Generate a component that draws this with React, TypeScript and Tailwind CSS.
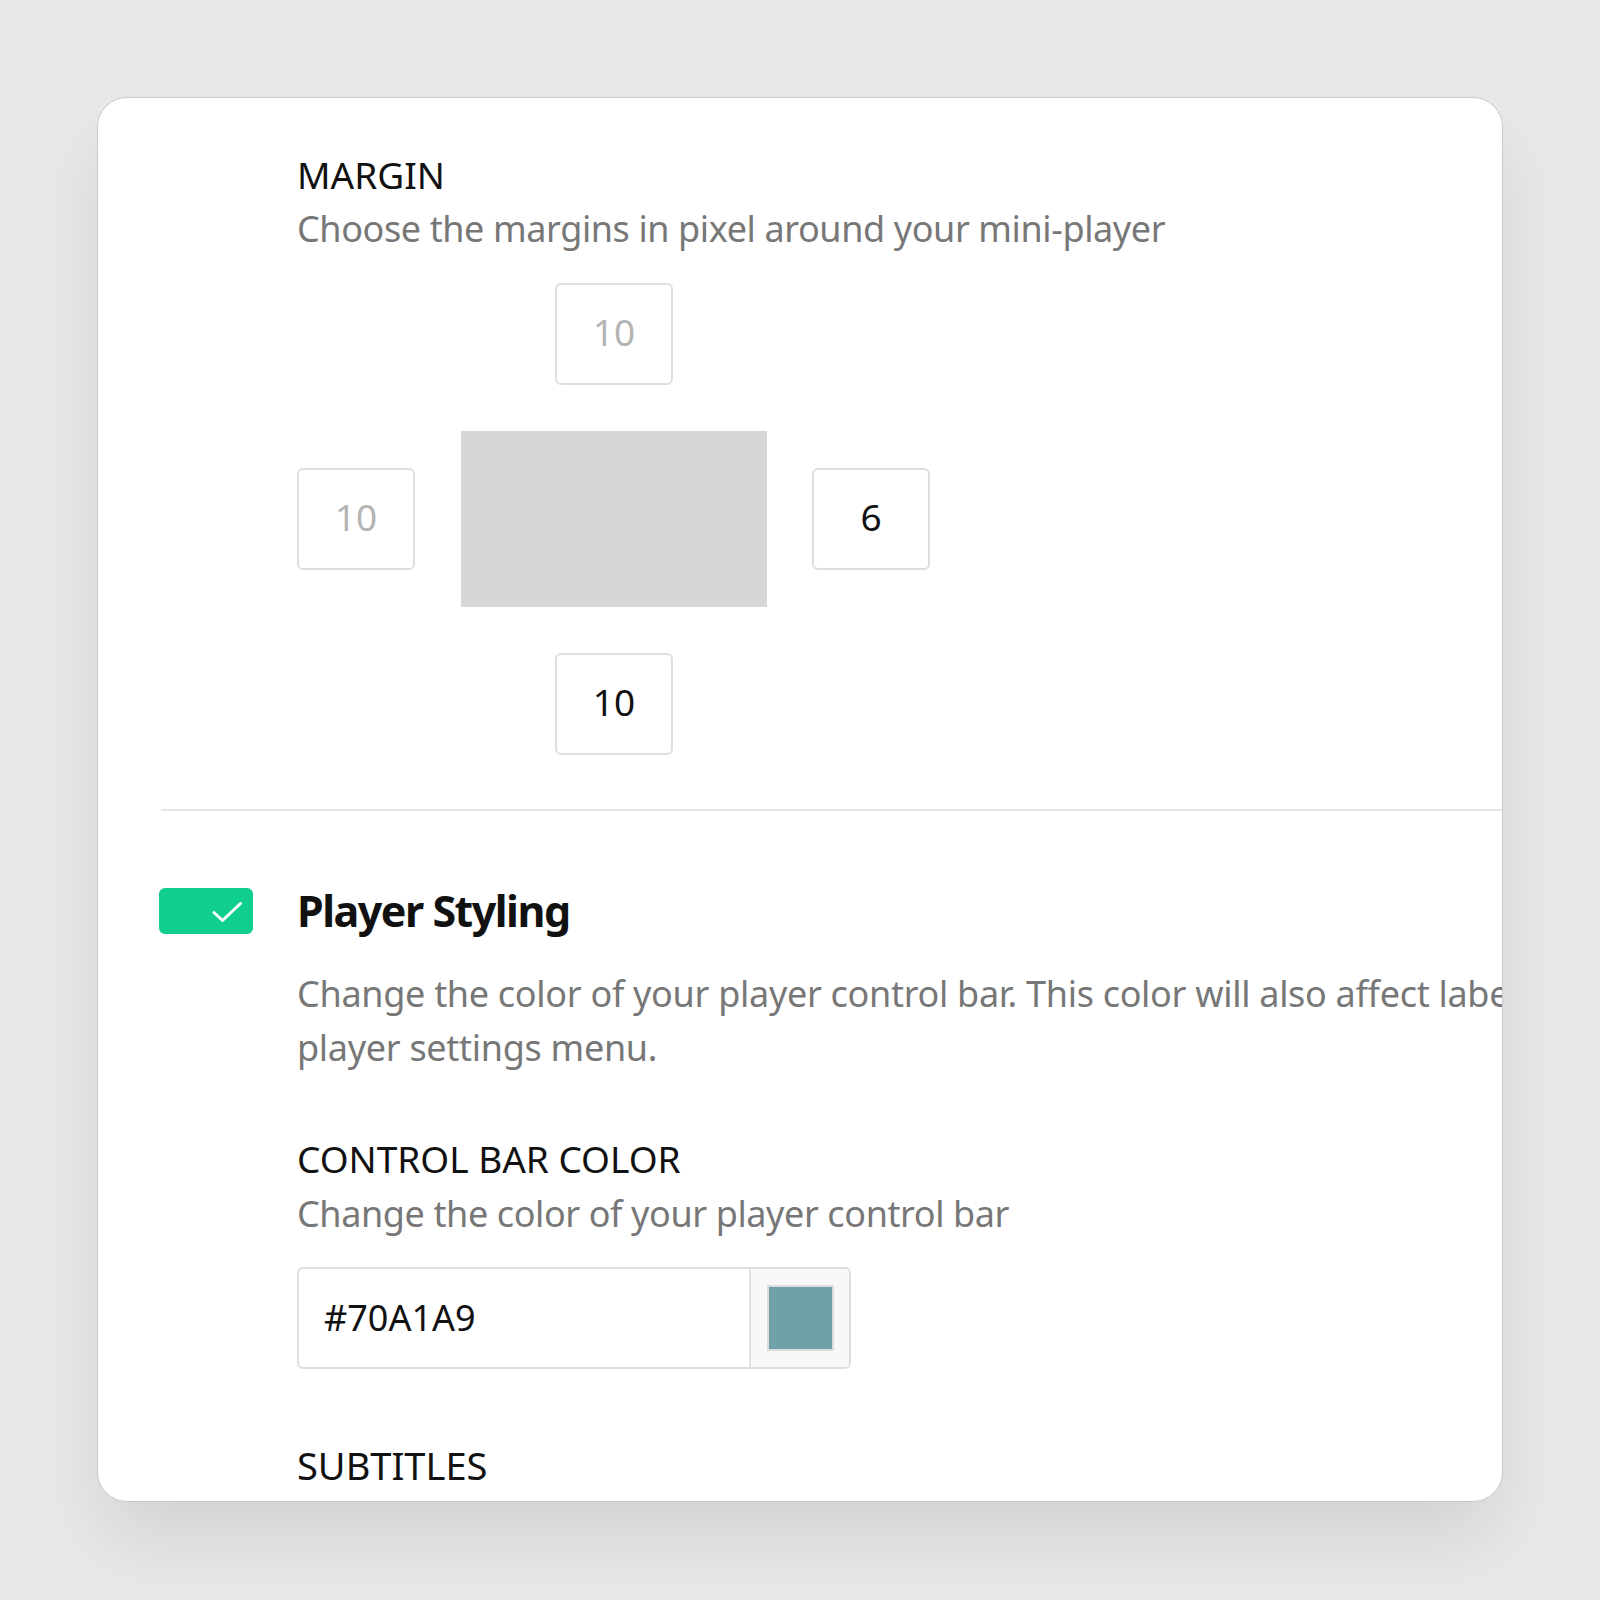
import React from "react";

function MarginBox({ value, muted }: { value: string; muted?: boolean }) {
  return (
    <div
      className={
        "flex h-[102px] w-[118px] items-center justify-center rounded-[6px] border-2 border-[#dedede] bg-white pb-[6px] text-[37px] leading-none " +
        (muted ? "text-[#b4b4b4]" : "text-[#111111]")
      }
    >
      {value}
    </div>
  );
}

export default function App() {
  return (
    <div className="h-[1600px] w-[1600px] bg-[#e8e8e8] pl-[97px] pt-[97px] font-['Noto_Sans',sans-serif]">
      <div className="h-[1405px] w-[1406px] overflow-hidden rounded-[30px] border border-[#c6c9d8] bg-white shadow-[0_40px_80px_-10px_rgba(0,0,0,0.11)]">
        {/* Margin */}
        <div className="pl-[199px] pt-[53px]">
          <h3 className="text-[37px] leading-[48px] text-[#111111]">MARGIN</h3>
          <p className="mt-[3px] text-[36px] leading-[54px] tracking-[-0.4px] text-[#777777]">
            Choose the margins in pixel around your mini-player
          </p>

          <div className="mt-[27px] grid grid-cols-[119px_306px_119px] grid-rows-[102px_176px_102px] gap-x-[45px] gap-y-[46px]">
            <div />
            <div className="justify-self-center">
              <MarginBox value="10" muted />
            </div>
            <div />
            <div className="self-center">
              <MarginBox value="10" muted />
            </div>
            <div className="bg-[#d6d6d6]" />
            <div className="self-center">
              <MarginBox value="6" />
            </div>
            <div />
            <div className="justify-self-center">
              <MarginBox value="10" />
            </div>
            <div />
          </div>
        </div>

        <div className="ml-[63px] mt-[54px] h-[2px] bg-[#e6e6e6]" />

        {/* Player styling */}
        <div className="mt-[77px] flex items-center">
          <div className="ml-[61px] h-[46px] w-[94px] rounded-[6px] bg-[#10cf8d]">
            <svg width="94" height="46" viewBox="0 0 94 46" fill="none">
              <polyline
                points="55,24.5 63.5,32.5 81.5,15.5"
                stroke="#ffffff"
                strokeWidth="3"
                strokeLinecap="round"
                strokeLinejoin="round"
              />
            </svg>
          </div>
          <h2 className="ml-[44px] text-[43px] font-bold leading-[46px] tracking-[-1.5px] text-[#111111]">
            Player Styling
          </h2>
        </div>

        <div className="pl-[199px]">
          <p className="mt-[33px] whitespace-nowrap text-[36px] leading-[54px] tracking-[-0.3px] text-[#777777]">
            Change the color of your player control bar. This color will also affect labels in the
            <br />
            player settings menu.
          </p>

          <h3 className="mt-[60px] text-[37px] leading-[48px] text-[#111111]">CONTROL BAR COLOR</h3>
          <p className="mt-[4px] text-[36px] leading-[54px] tracking-[-0.4px] text-[#777777]">
            Change the color of your player control bar
          </p>

          <div className="mt-[26px] flex h-[102px] w-[554px] overflow-hidden rounded-[6px] border-2 border-[#dedede]">
            <div className="flex flex-1 items-center pl-[25px] text-[36px] text-[#111111]">#70A1A9</div>
            <div className="flex w-[100px] items-center justify-center border-l-2 border-[#e2e2e2] bg-[#f8f8f8]">
              <div className="h-[66px] w-[67px] border-2 border-[#dcdcdc] bg-[#70a1a9]" />
            </div>
          </div>

          <h3 className="mt-[72px] text-[38px] leading-[48px] text-[#111111]">SUBTITLES</h3>
        </div>
      </div>
    </div>
  );
}
